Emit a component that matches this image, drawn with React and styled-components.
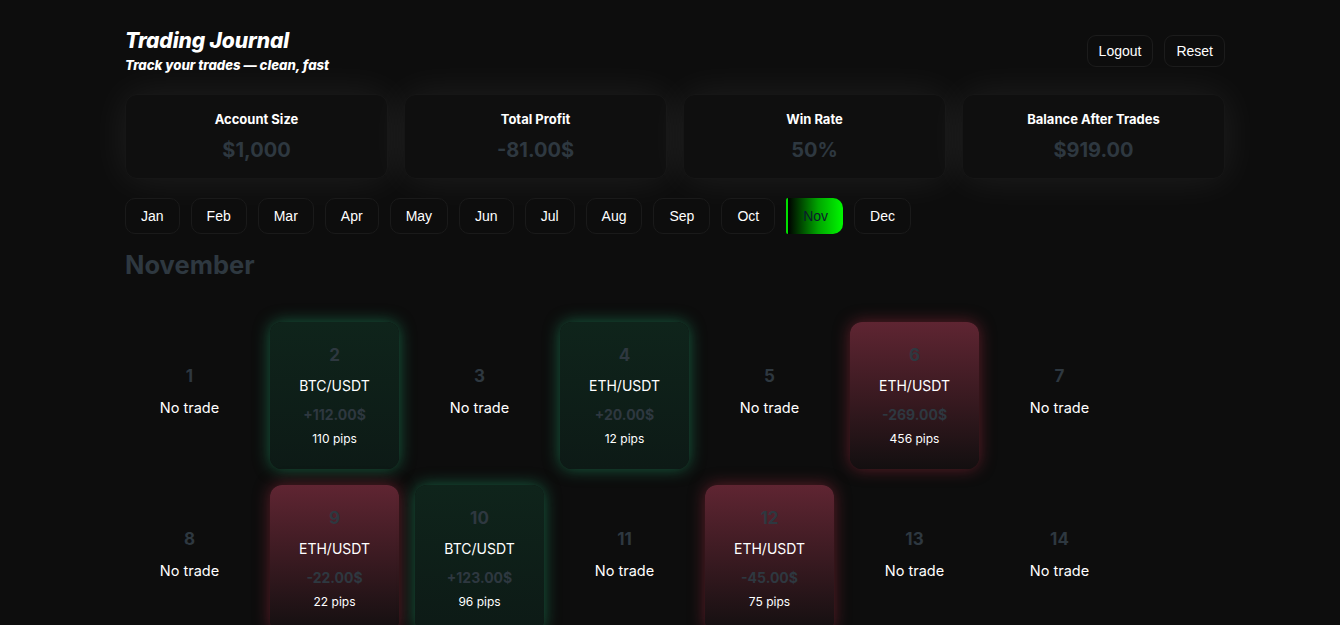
import React, { useState } from "react";
import styled, { createGlobalStyle, css } from "styled-components";

const GlobalStyle = createGlobalStyle`
html, body {
  margin: 0;
  padding: 0;
  background: #0d0d0d;
  overflow: hidden;
}
* { box-sizing: border-box; }
body {
  font-family: "Inter", "Open Sans", sans-serif;
  color: #fff;
}
`

const Page = styled.div`
min-height: 625px;
padding: 28px 115px 0 125px;
background: #0d0d0d;
`
const Header = styled.div`
display: flex;
justify-content: space-between;
align-items: flex-start;
`
const TitleBox = styled.div`
display: flex;
flex-direction: column;
`
const Title = styled.h1`
margin: 0;
font-size: 21px;
line-height: 26px;
font-weight: 800;
font-style: italic;
letter-spacing: -0.1px;
`
const Subtitle = styled.p`
margin: 3px 0 0;
font-size: 13.2px;
line-height: 16px;
font-weight: 800;
font-style: italic;
`
const HeaderActions = styled.div`
display: flex;
gap: 11px;
margin-top: 7px;
`
const HeaderButton = styled.button`
height: 32px;
padding: 0 11px;
background: #0d0d0d;
border: 1px solid #1c1c1c;
border-radius: 9px;
color: #fff;
font-family: "Liberation Sans", Arial, sans-serif;
font-size: 14px;
cursor: pointer;
`
const StatsRow = styled.div`
display: grid;
grid-template-columns: repeat(4, 1fr);
gap: 16px;
margin-top: 21px;
`
const StatCard = styled.div`
height: 85px;
background: #0f0f0f;
border: 1px solid #161616;
border-radius: 12px;
box-shadow: 0 0 40px rgba(255, 255, 255, 0.08);
display: flex;
flex-direction: column;
align-items: center;
padding-top: 15px;
`
const StatLabel = styled.div`
font-size: 13px;
font-weight: 700;
line-height: 18px;
`
const StatValue = styled.div`
margin-top: 10px;
font-size: 20px;
font-weight: 700;
line-height: 24px;
color: #2e3840;
`
const MonthRow = styled.div`
display: flex;
gap: 11px;
margin-top: 19px;
`
const MonthButton = styled.button`
height: 36px;
padding: 0 15px;
border-radius: 10px;
border: 1px solid #1a1a1a;
background: #0d0d0d;
color: #fff;
font-family: "Liberation Sans", Arial, sans-serif;
font-size: 14px;
cursor: pointer;
${p => p.$active && css`
  border: none;
  border-left: 2px solid #00e000;
  border-radius: 2px 10px 10px 2px;
  background: linear-gradient(90deg, #000 0%, #00a600 55%, #00f800 100%);
  color: #0c1a2c;
  padding: 0 15px 0 15px;
`}
`
const MonthTitle = styled.h2`
margin: 16px 0 0;
font-size: 25.5px;
line-height: 30px;
font-weight: 700;
color: #2e3840;
`
const Grid = styled.div`
display: grid;
grid-template-columns: repeat(7, 129px);
grid-auto-rows: 147px;
gap: 16px;
margin-top: 42px;
`
const DayCard = styled.div`
border-radius: 12px;
display: flex;
flex-direction: column;
align-items: center;
justify-content: center;
text-align: center;
padding-bottom: 8px;
${p => p.$kind === "win" && css`
  padding-bottom: 0;
  background: linear-gradient(180deg, #0f241b 0%, #0d1a16 100%);
  box-shadow: 0 0 16px rgba(30, 150, 100, 0.6);
`}
${p => p.$kind === "loss" && css`
  padding-bottom: 0;
  background: linear-gradient(180deg, #5f2532 0%, #3a1a21 50%, #130f10 100%);
  box-shadow: 0 0 16px rgba(150, 40, 58, 0.6);
`}
`
const DayNum = styled.div`
font-size: 17px;
font-weight: 700;
line-height: 22px;
color: #2e3840;
`
const NoTrade = styled.div`
margin-top: 11px;
font-size: 14.5px;
line-height: 20px;
`
const Pair = styled.div`
margin-top: 10px;
font-size: 14px;
line-height: 20px;
`
const Profit = styled.div`
margin-top: 9px;
font-size: 14px;
font-weight: 700;
line-height: 20px;
color: #2e3840;
`
const Pips = styled.div`
margin-top: 5px;
font-size: 12px;
line-height: 18px;
`

const months = ["Jan","Feb","Mar","Apr","May","Jun","Jul","Aug","Sep","Oct","Nov","Dec"];

const trades = {
  2: { pair: "BTC/USDT", profit: 112, pips: 110 },
  4: { pair: "ETH/USDT", profit: 20, pips: 12 },
  6: { pair: "ETH/USDT", profit: -269, pips: 456 },
  9: { pair: "ETH/USDT", profit: -22, pips: 22 },
  10: { pair: "BTC/USDT", profit: 123, pips: 96 },
  12: { pair: "ETH/USDT", profit: -45, pips: 75 },
};

const fmt = v => (v >= 0 ? "+" : "-") + Math.abs(v).toFixed(2) + "$";

const App = () => {
  const [month, setMonth] = useState("Nov");
  const days = Array.from({ length: 14 }, (_, i) => i + 1);
  return (
    <>
      <GlobalStyle />
      <Page>
        <Header>
          <TitleBox>
            <Title>Trading Journal</Title>
            <Subtitle>Track your trades — clean, fast</Subtitle>
          </TitleBox>
          <HeaderActions>
            <HeaderButton>Logout</HeaderButton>
            <HeaderButton>Reset</HeaderButton>
          </HeaderActions>
        </Header>
        <StatsRow>
          <StatCard><StatLabel>Account Size</StatLabel><StatValue>$1,000</StatValue></StatCard>
          <StatCard><StatLabel>Total Profit</StatLabel><StatValue>-81.00$</StatValue></StatCard>
          <StatCard><StatLabel>Win Rate</StatLabel><StatValue>50%</StatValue></StatCard>
          <StatCard><StatLabel>Balance After Trades</StatLabel><StatValue>$919.00</StatValue></StatCard>
        </StatsRow>
        <MonthRow>
          {months.map(m => (
            <MonthButton key={m} $active={m === month} onClick={() => setMonth(m)}>{m}</MonthButton>
          ))}
        </MonthRow>
        <MonthTitle>November</MonthTitle>
        <Grid>
          {days.map(d => {
            const t = trades[d];
            if (!t) {
              return (
                <DayCard key={d}>
                  <DayNum>{d}</DayNum>
                  <NoTrade>No trade</NoTrade>
                </DayCard>
              );
            }
            return (
              <DayCard key={d} $kind={t.profit >= 0 ? "win" : "loss"}>
                <DayNum>{d}</DayNum>
                <Pair>{t.pair}</Pair>
                <Profit>{fmt(t.profit)}</Profit>
                <Pips>{t.pips} pips</Pips>
              </DayCard>
            );
          })}
        </Grid>
      </Page>
    </>
  );
};

export default App;
